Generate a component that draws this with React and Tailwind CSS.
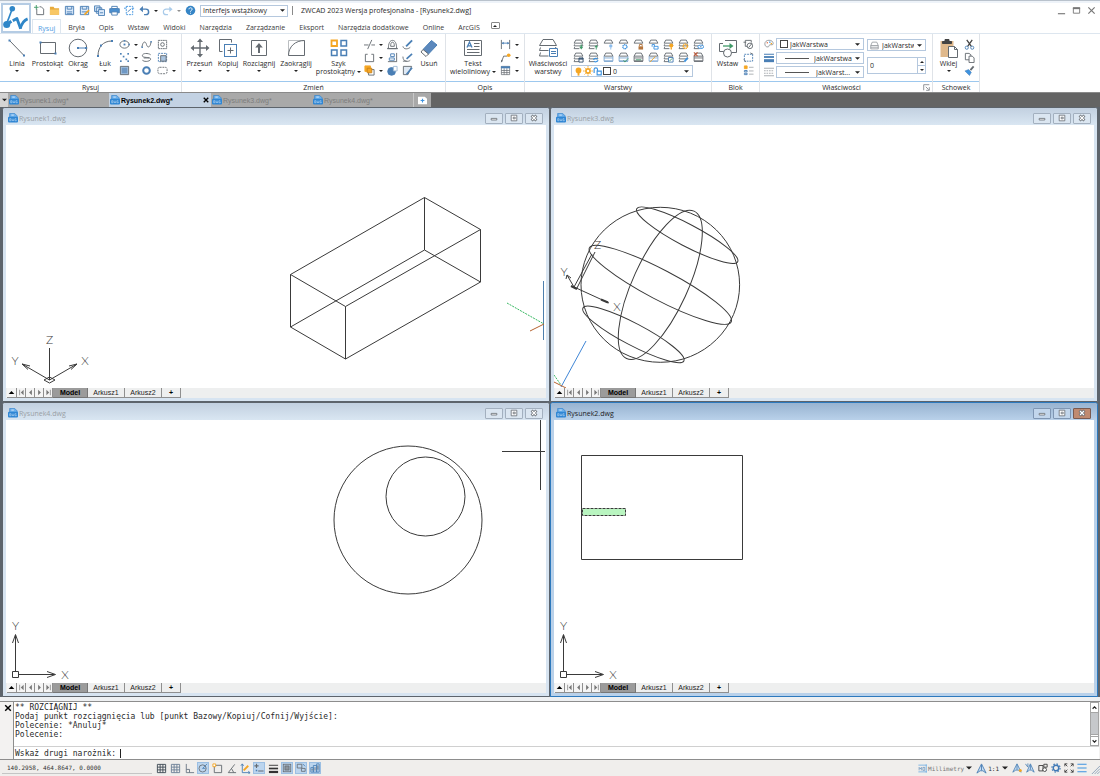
import React from "react";

const G = "#656b71";
const B = "#4a7fb5";
const L = "#3d93e0";
const O = "#f5a623";

/* ---------- icon drawings: large ones on a 20 grid, small ones on a 12 grid ---------- */

const Dot = ({ x, y, c = B, r = 1 }) => (
  <rect x={x - r} y={y - r} width={r * 2} height={r * 2} fill={c} stroke="none" />
);

const big = {
  linia: (
    <>
      <path d="M2.5 2.5 17 17.5" />
      <Dot x={2.5} y={2.5} />
      <Dot x={17} y={17.5} />
    </>
  ),
  prostokat: (
    <>
      <path d="M2.5 4.5h15v11h-15z" />
      <Dot x={2.5} y={4.5} />
      <Dot x={17.5} y={15.5} />
    </>
  ),
  okrag: (
    <>
      <circle cx="10" cy="10" r="8.8" />
      <path d="M10 10h8" stroke={B} />
      <Dot x={10} y={10} />
      <Dot x={18} y={10} />
    </>
  ),
  luk: (
    <>
      <path d="M3 18C3 9 8 3 17 3" />
      <Dot x={3} y={18} />
      <Dot x={6} y={7.5} />
      <Dot x={17} y={3} />
    </>
  ),
  przesun: (
    <>
      <path d="M10 2v16M2 10h16" strokeWidth="1.4" />
      <path d="m10 .5 3 3.5H7zM10 19.5l3-3.5H7zM.5 10 4 7v6zM19.500 10 16 7v6z" fill={G} stroke="none" />
    </>
  ),
  kopiuj: (
    <>
      <path d="M4.500 13.500h-3v-12h12v3" />
      <rect x="6.500" y="6.500" width="12" height="12" stroke={B} fill="#fff" />
      <path d="M12.500 9.500v6M9.500 12.500h6" />
    </>
  ),
  rozciagnij: (
    <>
      <path d="M2.500 2.500h15v15h-15z" />
      <path d="M10 15V8" strokeWidth="2" />
      <path d="m10 5 3.800 4.500H6.200z" fill={G} stroke="none" />
    </>
  ),
  zaokraglij: (
    <>
      <path d="M2.500 17.500v-15h16" stroke="#a9adb1" strokeWidth=".8" />
      <path d="M2.500 17.500c0-9 7-15 16-15v15z" />
    </>
  ),
  szyk: (
    <>
      <path d="M2.500 2.500h5.500v5.500H2.500z" stroke={O} strokeWidth="1.800" />
      <path d="M12 2.500h5.500v5.500H12zM2.500 12h5.500v5.500H2.500zM12 12h5.500v5.500H12z" stroke={B} strokeWidth="1.500" />
    </>
  ),
  usun: (
    <>
      <path d="M12.500 2.500 18 7 9.500 16 4 11.500z" fill="#5b88bd" stroke={B} />
      <path d="M4 11.500 9.500 16 7 18.500 2 14z" fill="#fff" />
    </>
  ),
  tekst: (
    <>
      <path d="M1.500 2.500h17v15h-17z" fill="#fff" />
      <path d="M4 9.500 6.500 4 9 9.500M5 7.800h3" stroke={B} strokeWidth="1.300" />
      <path d="M11 5.500h5.500M11 8.500h5.500M4 11.500h12.500M4 14.500h12.500" />
    </>
  ),
  wlasciwosci: (
    <>
      <path d="M5 1.500h10l3.500 6h-17z" fill="#fff" />
      <path d="M2.500 9.500l-1 3h9M2.500 14.500l-1 3.500h9M17.500 9l.5 1.500" />
      <path d="M11.500 10.500h8v8h-8z" fill="#fff" stroke={B} />
      <path d="M13 13.500h5M13 15.500h5" stroke={B} />
    </>
  ),
  wstaw: (
    <>
      <path d="M6 13.500H1.500v-8H5M7 2.500h11.500v12h-5" />
      <circle cx="9.500" cy="15" r="4" fill="#fff" />
      <path d="M5 8h7" stroke="#3f9a68" strokeWidth="1.300" />
      <path d="m11.500 5 4 3-4 3z" fill="#3f9a68" stroke="none" />
    </>
  ),
  wklej: (
    <>
      <path d="M1.500 3h13v16h-13z" fill="#e0b98c" stroke="none" />
      <path d="M3.500 3.500h9v2h-9zM6 1.500h4v2H6z" fill="#444" stroke="#444" />
      <path d="M9.500 8.500h6l3 3v8h-9z" fill="#fff" />
      <path d="M15.500 8.500v3h3" />
    </>
  ),
};

const small = {
  elipsa: (<><ellipse cx="6" cy="6" rx="5" ry="4" /><Dot x={6} y={6} /><Dot x={6} y={2} r={0.8} /><Dot x={11} y={6} r={0.8} /></>),
  punkty: (<>{[[2, 2], [10, 2], [5, 5], [2, 10], [8, 8], [10, 10]].map(([x, y]) => <Dot key={`${x}-${y}`} x={x} y={y} r={0.9} />)}</>),
  kreskuj: (<><path d="M1.500 1.500h9v9h-9z" fill="#a3bedb" /><path d="M3 3h6v6H3z" fill="#6f98c4" stroke="none" /></>),
  splajn: (<><path d="M1 9C2 2 5 2 6 6s4 4 5-3" /><Dot x={1.300} y={9} r={0.8} /><Dot x={11} y={3} r={0.8} /></>),
  spirala: <path d="M10.500 3C8 1 1.500 1 1.500 4S10 5 10.500 7.500 4 11.500 1.500 9M3 6.500h6" />,
  pierscien: <circle cx="6" cy="6" r="3.600" stroke={B} strokeWidth="2.200" />,
  region: (<><path d="M1.500 1.500h9v9h-9z" strokeDasharray="2 .5" /><circle cx="6" cy="6" r="2" /></>),
  obszar: (<><path d="M1.500 1.500h9v9h-9z" stroke={B} strokeDasharray="2 1" /><path d="M4 4h6v6H4z" fill="#a9c4e0" /></>),
  chmurka: <rect x="1" y="2.500" width="10" height="7" rx="2" strokeDasharray="2 1" />,
  utnij: (<><path d="M0 6.500h5M8 6.500h4" /><path d="M8.500 1 4 11" /></>),
  przerwij: <path d="M4 2.500H1.500v8h9v-8H8" />,
  kolejnosc: (<><path d="M1 1h6v6H1z" fill={O} stroke={O} /><path d="M5 5h6v6H5z" fill="#fff" /><path d="M3.500 3.500h5v5h-5z" fill={O} stroke="#c9821a" /></>),
  odsun: (<><path d="M1.500 10.500C1.500 5 3 1.500 6 1.500S10.500 5 10.500 10.500z" /><path d="M4 8c0-3 .5-4.500 2-4.500S8 5 8 8zM0 10.500h12" /></>),
  wyrownaj: (<><path d="M10.500 1v10M1 10.500h9" /><path d="M4 2h4v3H4zM2.500 6.500H8V9H2.500z" stroke={B} /></>),
  bryla: (<><circle cx="5" cy="7" r="4.200" fill={B} stroke={B} /><path d="M7 1.500h4v5H7z" fill="#fff" stroke="#9fb9d4" /></>),
  edytuj: (<><path d="M1 8c1 4 6 3 8 1" /><path d="M4.500 8 11 1.500" stroke={B} strokeWidth="2" /></>),
  edytuj2: (<><path d="M1 5c0 6 6 6 8 4M1 10h4" /><path d="M5 7.500 11 2" stroke={B} strokeWidth="1.800" /></>),
  edytuj3: (<><path d="M1.500 1.500h9l-4 9h-5z" fill="#dfe9f4" /><path d="M5 10 11 3" stroke={B} strokeWidth="1.800" /></>),
  wymiar: (<><path d="M1.500 1v10M10.500 1v10" /><path d="M2 4.500h8" stroke={B} /><path d="m2 4.500 2-1.500v3zM10 4.500 8 3v3z" fill={B} stroke="none" /></>),
  odnosnik: (<><path d="M1.500 11 4 4.500h4" /><path d="m1 11.500.3-3 2 1z" fill={G} stroke="none" /><circle cx="9.500" cy="3.500" r="2" fill={O} stroke="none" /></>),
  tabela: (<><path d="M1.500 1.500h9v9h-9zM1.500 6h9M1.500 8.300h9M4.500 3.500v7M7.500 3.500v7" strokeWidth=".8" /><path d="M1 2.500h10" stroke={B} strokeWidth="2.200" /></>),
  blok1: (<><path d="M9 4V1.500H2.500V8H5M.5 3.500h3" /><circle cx="7.500" cy="7.500" r="3" fill="#fff" /><path d="m6 9.500 4-5" /></>),
  blok2: (<><path d="M1.500 2.500h9v7.500h-9z" strokeDasharray="2 1" stroke={B} /><path d="m8 1 3 1.500M1 8l2 3" stroke={G} /></>),
  blok3: (<><path d="M1.500 1h3v3h-3z" fill={O} stroke={O} /><path d="M1.500 6h3v1.500h-3zM1.500 9h3v1.500h-3z" stroke={B} /><path d="M6.500 2.500h5M6.500 6.500h5M6.500 10h5" stroke="#a9adb1" /></>),
  paleta: (<><path d="M6 1.500c-3 0-5 2-5 4.300C1 8 2.500 10 5 9.500c1.500-.5.500-2 2-2.500s4 .8 4-1.500C11 3 9 1.500 6 1.500z" stroke="#8a8f94" /><Dot x={4} y={4.500} c="#e27b58" r={0.800} /><Dot x={7} y={3.800} c={L} r={0.800} /><Dot x={8.800} y={5.500} c={O} r={0.800} /></>),
  grubosc: (<><path d="M0 1.500h12" strokeWidth="1.200" stroke={B} /><path d="M0 4.800h12" strokeWidth="2.200" stroke={B} /><path d="M0 9.200h12" strokeWidth="3.600" stroke={B} /></>),
  rodzaj: (<><path d="M0 1.500h12M0 10.500h12" stroke="#9a9fa4" /><path d="M0 4.500h12M0 7.500h12" strokeDasharray="2 1" stroke="#9a9fa4" /></>),
  nozyczki: (<><path d="M3 1l5 7M9 1 4 8" strokeWidth="1.400" stroke="#444" /><circle cx="3" cy="9.500" r="1.700" stroke={B} /><circle cx="9" cy="9.500" r="1.700" stroke={B} /></>),
  kopie: (<><path d="M1.500 1.500h4L7.500 3v5.500h-6z" /><path d="M5.500 4.500h3.500l2 2v5H5.500z" fill="#fff" /></>),
  pedzel: (<><path d="M1 6.500 5 5l3 3-2 3.500z" fill={L} stroke={B} strokeWidth=".6" /><path d="m7 5.500 3.500-4" strokeWidth="2" stroke={G} /></>),
  nowy: (<><path d="M3 4v6.500h7.500V4.500L8 2H6" /><path d="M2.500 0v5M0 2.500h5" stroke="#3f9a68" /></>),
  otworz: (<><path d="M1 2h4l1 1.500h5v7H1z" fill="#e8ab3c" stroke="none" /><path d="M1 5h10v5.500H1z" fill="#f8c765" stroke="none" /></>),
  zapisz: (<><path d="M1.500 1.500h9v9h-9z" stroke={B} fill="#dceafa" /><path d="M3.500 1.500v3h5v-3M3 7.500h6M3 9.500h6" stroke={B} /></>),
  zapiszjako: (<><path d="M1.500 1.500h9v9h-9z" stroke={B} fill="#dceafa" /><path d="M3.500 1.500v3h5v-3M3 7.500h6" stroke={B} /><path d="m6 10.500 5-5" stroke={O} strokeWidth="1.800" /></>),
  wszystkie: (<><path d="M.5 1h6v6h-6zM2.500 3h6v6h-6z" stroke={B} fill="#dceafa" /><path d="M5 5h6.500v6.500H5z" stroke={B} fill="#dceafa" /><path d="M6.500 8.500h3.500" stroke={B} /></>),
  drukuj: (<><path d="M3 1.500h6V4H3z" stroke={B} /><path d="M.8 4h10.400v4.500H.8z" fill="#4a8fd0" stroke={B} /><path d="M3 7.500h6v3.500H3z" fill="#fff" stroke={B} /></>),
  podglad: (<><path d="M2.500 1.500h7v9h-7zM0 3.500h3M9 3.500h3" stroke={L} strokeDasharray="2 1" /><path d="M4 7.500 8 4" stroke={B} /></>),
  cofnij: (<><path d="M3 4.500h4.500a3 3 0 0 1 0 6H5.500" stroke={B} strokeWidth="1.600" /><path d="m.5 4.500 3.800-3.300v6.600z" fill={B} stroke="none" /></>),
  ponow: (<><path d="M9 4.500H4.500a3 3 0 0 0 0 6h2" stroke="#a9cbea" strokeWidth="1.300" /><path d="m11.500 4.500-3.500-3v6z" fill="#a9cbea" stroke="none" /></>),
  pomoc: (<><circle cx="6" cy="6" r="5.200" fill="#3585c6" stroke="none" /><path d="M4.300 4.700C4.300 2.500 7.800 2.500 7.800 4.600 7.800 6 6 5.800 6 7.300M6 8.500v1" stroke="#fff" /></>),
  dwg: (<><path d="M2 .5h6l3 3v4H2z" fill="#6db0ec" stroke="#2f7fc8" strokeWidth=".8" /><rect x="0" y="4.500" width="12" height="7" rx="1.300" fill="#2f86d4" stroke="none" /><path d="M2 6.800v2.500h1.500V6.800zM5 6.800v2.500l1-.8 1 .8V6.800M10 6.800H8.500v2.500H10V8" stroke="#cfe4f8" strokeWidth=".6" /><path d="M4 2.500h3" stroke="#fff" strokeWidth=".8" /></>),
  siatka: <path d="M1.500 1.500h9v9h-9zM4.500 1.500v9M7.500 1.500v9M1.500 4.500h9M1.500 7.500h9" stroke="#3f4a55" />,
  siatka2: <path d="M1.500 1.500h9v9h-9zM4.500 1.500v9M7.500 1.500v9M1.500 4.500h9M1.500 7.500h9" stroke="#6c8097" />,
  orto: <path d="M2.500 1v9.500H11M2.500 7h3.500v3.500" stroke="#6b7785" />,
  biegun: (<><circle cx="5.500" cy="6.500" r="4.300" /><path d="M5.500 6.500 11 1M5.500 6.500H9" stroke={B} /></>),
  obiekt: (<><path d="M2.500 2.500h8v8h-8z" /><path d="M1 1h3v3H1z" stroke={O} fill="#fff" /></>),
  kat: <path d="m9.500 1.500-7 9H11M6 6l2.500 4.500" />,
  ukl: (<><path d="M2.500 1v9.500H11M1 3l1.500-2L4 3M9 9l2 1.500L9 12" stroke={B} /><path d="m4 8 5-5" stroke={O} strokeWidth="2" /></>),
  dyn: (<><path d="M3 1v5M.5 3.500h5M5 9.500h6.500" strokeWidth="1.300" /><Dot x={3} y={9} r={0.900} /></>),
  linie: (<><path d="M1 2.500h10" stroke="#333" /><path d="M1 6h10" strokeWidth="1.800" stroke="#333" /><path d="M1 9.800h10" strokeWidth="2.400" stroke="#333" /></>),
  model: (<><rect x="1.500" y="1.500" width="9" height="9" /><rect x="3.500" y="3.500" width="5" height="5" fill="#8b949d" /></>),
  cykl: (<><path d="M1.500 1.500H7V6H1.500zM6.500 6.500h4.500V10H6.500z" /><path d="m8 1 3 3" stroke={B} /></>),
  warstwyStat: (<><path d="M1 5.500h3v5.500H1zM4 3h4v8H4zM8 1h3v10H8z" stroke={B} /><path d="M2.500 7v2M6 5v4M9.500 3v5" /></>),
  mo: (<><path d="M.5 1.500h11M.5 10.500h11M11 .5v11" stroke={L} strokeWidth=".8" /><path d="M1.500 8.500v-4l1.500 2 1.500-2v4M6.500 4.500h2.500v4H6.500z" stroke={B} strokeWidth=".8" /></>),
  ann: <path d="M6 1 1 11l3.500-2.500h3L11 11zM6 2v6" stroke={B} fill="#c9def2" />,
  annplus: (<><path d="M6 1 1 11l3.500-2.500h3L11 11zM6 2v6" stroke={B} fill="#c9def2" /><circle cx="10" cy="9" r="1.800" fill={O} stroke="none" /></>),
  annauto: (<><path d="M6.500 1 2 11l3.500-2.500h2L11 11zM6.500 2v6" stroke={B} fill="#c9def2" /><path d="m.5 1 3 4M3.500.500v4" stroke={B} /></>),
  izoluj: (<><path d="M1 3h5v6.500H1zM7 1.500h4V5H7z" stroke="#333" /><circle cx="8" cy="8" r="2.200" stroke="#333" fill="#fff" /></>),
  ust: (<><circle cx="6" cy="6" r="3.300" stroke="#3f78b5" strokeWidth="1.800" /><circle cx="6" cy="6" r="4.900" stroke="#3f78b5" strokeDasharray="1.800 2.050" strokeWidth="1.400" /></>),
  pelny: <path d="M1 4V1h3M8 1h3v3M11 8v3H8M4 11H1V8M1 1l3 3M11 1 8 4M11 11 8 8M1 11l3-3" stroke="#333" />,
  menu: <path d="M.5 1.500h11M.5 6h11M.5 10.500h11" stroke={L} strokeWidth="1.300" />,
};

const top = <path d="M3 1.200h6l1.800 3.300H1.200z" fill="#fff" />;
const full = <>{top}<path d="M1.800 5.800l-.6 1.700h9.600l-.6-1.700M1.800 8.800l-.6 1.700H7" /></>;
const stack = (c) => <>{top}<path d="M1.200 4.500v2h9.600v-2M1.200 6.500v3.500h9.600V6.500" stroke={c} /><path d="M1.200 10h9.600" stroke={c} strokeWidth="1.500" /></>;

const warstwy = {
  "Ustaw bieżącą": <>{full}<path d="M9 6v3" stroke="#3f9a68" strokeWidth="1.300" /><path d="M6.800 8.500h4.400L9 11.500z" fill="#3f9a68" stroke="none" /></>,
  "Poprzednia warstwa": <>{full}<path d="M9 8v3.500" stroke="#3f9a68" /><path d="M7 9h4L9 6.500z" fill="#3f9a68" stroke="none" /></>,
  "Wyłącz warstwę": <>{top}<circle cx="8.500" cy="7.500" r="1.800" fill="#8dbdec" stroke="none" /><path d="M8.500 9v2.500" stroke="#8dbdec" /></>,
  "Zablokuj widok": <>{top}<circle cx="7.500" cy="8.500" r="2.200" stroke={L} strokeWidth="1.500" strokeDasharray="1.200 .5" /></>,
  "Zamknij warstwę": <>{top}<path d="M6 8h5v3.500H6z" fill="#b5763e" stroke="none" /><path d="M7 8V6h3v2" stroke="#b5763e" /></>,
  "Otwórz warstwę": <>{top}<path d="M6.500 8h4.500v3H6.500z" stroke={L} /><path d="M4.500 8.500V6H7v2" stroke={L} /></>,
  "Włącz wszystkie": <>{full}<circle cx="9" cy="7" r="2.200" fill={O} stroke="none" /><path d="M9 9v2.500" stroke={O} strokeWidth="1.500" /></>,
  "Odblokuj wszystkie": <>{full}<circle cx="8" cy="8" r="2.300" stroke={O} strokeWidth="1.700" strokeDasharray="1.300 .5" /></>,
  "Izoluj warstwę": <>{full}<ellipse cx="8.500" cy="8.500" rx="3.200" ry="1.900" fill="#fff" stroke={L} /><Dot x={8.500} y={8.500} r={0.700} /></>,
  "Stany warstw": <>{full}<path d="M6.500 6.500H11v4.500H6.500z" fill="#fff" stroke="#33506e" /><path d="M6.500 7.500H11" stroke="#33506e" strokeWidth="1.600" /></>,
  "Zamień warstwę": <>{full}<path d="M6 8.500c1-2 3-2 4.500-1M11 9c-1 2-3 2-4.500 1" stroke={L} strokeWidth="1.400" /></>,
  "Przenieś na warstwę": stack("#7fa8d2"),
  "Dopasuj warstwę": <>{stack("#7fa8d2")}<path d="m6 9 1.500 2L11 7" stroke="#3f9a68" /></>,
  "Scal warstwy": <>{stack("#6a6f75")}<path d="M3 8.500h6" stroke="#3f9a68" /></>,
  "Przegląd warstw": <>{stack("#8fb3da")}<path d="m2 11 6-6" stroke={O} /></>,
  "Kopiuj na warstwę": <>{full}<path d="M6 6h5v5H6z" stroke={B} fill="#fff" /><path d="m7 10 3-3" stroke="#3f9a68" /></>,
  "Przywróć warstwę": <>{full}<path d="m7 10.500 3.500-4" stroke={L} strokeWidth="2" /></>,
  "Usuń warstwę": <>{stack("#6a6f75")}<path d="m1 .5 4 4M5 .5l-4 4" stroke="#c05a3a" strokeWidth="1.200" /></>,
};

const Art = ({ children, box, className }) => (
  <svg viewBox={`0 0 ${box} ${box}`} className={className} fill="none" stroke={G} strokeWidth="1" aria-hidden="true">
    {children}
  </svg>
);

const Small = ({ name, className = "size-[11px]" }) => (
  <Art box={12} className={`shrink-0 ${className}`}>{small[name]}</Art>
);

const Caret = ({ className = "h-[3px] w-[5px]" }) => (
  <svg viewBox="0 0 6 3" className={`shrink-0 pointer-events-none ${className}`} aria-hidden="true">
    <path d="M0 0h6L3 3z" fill="#222" />
  </svg>
);

/* ---------- title bar ---------- */

const Logo = () => (
  <button aria-label="Menu aplikacji" className="size-[30px] shrink-0 border-2 border-[#b5cce4] bg-white">
    <svg viewBox="0 0 28 28" className="size-full" fill="none" stroke="#2f86c8" aria-hidden="true">
      <circle cx="10" cy="4" r="3" fill="#2f86c8" stroke="none" />
      <circle cx="4" cy="21" r="3.800" fill="#2f86c8" stroke="none" />
      <path d="M10 4 4 20" strokeWidth="1.800" />
      <path d="M4 21 9 17.500" strokeWidth="3.500" />
      <path d="M10.500 17 15 14.500 19 25.500" strokeWidth="3" strokeLinejoin="round" />
      <path d="M18.500 25.500c1.500-5 4-9 8-10.500" strokeWidth="3" />
    </svg>
  </button>
);

const Tool = ({ name, label }) => (
  <button aria-label={label} className="flex h-[13px] w-[15px] items-center justify-center">
    <Small name={name} />
  </button>
);

function TitleBar() {
  return (
    <div className="flex h-[15px] items-center">
      <div className="flex items-center">
        <Tool name="nowy" label="Nowy" />
        <Tool name="otworz" label="Otwórz" />
        <Tool name="zapisz" label="Zapisz" />
        <Tool name="zapiszjako" label="Zapisz jako" />
        <Tool name="wszystkie" label="Zapisz wszystko" />
        <Tool name="drukuj" label="Drukuj" />
        <Tool name="podglad" label="Podgląd" />
        <Tool name="cofnij" label="Cofnij" />
        <button aria-label="Lista cofania" className="flex w-[8px] justify-center"><Caret className="h-[2px] w-[4px]" /></button>
        <Tool name="ponow" label="Ponów" />
        <button aria-label="Lista ponawiania" className="flex w-[8px] justify-center opacity-50"><Caret className="h-[2px] w-[4px]" /></button>
        <Tool name="pomoc" label="Pomoc" />
      </div>
      <div className="ml-[2px] flex h-[12px] w-[88px] items-center border border-[#b5c8de] bg-white px-[2px]">
        <select aria-label="Obszar roboczy" className="h-full min-w-0 flex-1 appearance-none outline-none">
          <option>Interfejs wstążkowy</option>
        </select>
        <Caret />
      </div>
      <div className="ml-[4px] h-[9px] w-px bg-[#8a8a8a]" />
      <h1 className="ml-[8px]">ZWCAD 2023 Wersja profesjonalna - [Rysunek2.dwg]</h1>
      <div className="ml-auto flex gap-[5px] pr-[4px]">
        <button aria-label="Minimalizuj" className="flex size-[10px] items-center justify-center">
          <Art box={10} className="size-[9px]"><path d="M1 8.500h8" stroke="#8a8a8a" strokeWidth="1.500" /></Art>
        </button>
        <button aria-label="Maksymalizuj" className="flex size-[10px] items-center justify-center">
          <Art box={10} className="size-[9px]"><path d="M1.500 2h7v6h-7z" stroke="#777" /><path d="M1 2.500h8" stroke="#777" strokeWidth="2" /></Art>
        </button>
        <button aria-label="Zamknij" className="flex size-[10px] items-center justify-center">
          <Art box={10} className="size-[9px]"><path d="m1.500 1.500 7 7M8.500 1.500l-7 7" stroke="#777" strokeWidth="1.300" /></Art>
        </button>
      </div>
    </div>
  );
}

const ribbonTabs = ["Rysuj", "Bryła", "Opis", "Wstaw", "Widoki", "Narzędzia", "Zarządzanie", "Eksport", "Narzędzia dodatkowe", "Online", "ArcGIS"];

function RibbonTabs() {
  return (
    <nav className="flex h-[15px] items-stretch pt-px">
      {ribbonTabs.map((t, i) => (
        <button
          key={t}
          className={`pt-[3px] ${i === 0 ? "border border-b-0 border-[#dde6ef] px-[5px] text-[#4f9be3]" : "px-[7px] text-[#3a3a3a]"}`}
        >
          {t}
        </button>
      ))}
      <button aria-label="Zwiń wstążkę" className="ml-[4px] mt-[3px] flex h-[7px] w-[9px] items-center justify-center rounded-[1px] border border-[#888]">
        <svg viewBox="0 0 6 3" className="h-[2px] w-[4px]" aria-hidden="true"><path d="M0 3h6L3 0z" fill="#222" /></svg>
      </button>
    </nav>
  );
}

/* ---------- ribbon ---------- */

const Group = ({ title, width, children, launcher }) => (
  <section className={`flex shrink-0 flex-col border-r border-[#dfe3e8] ${width}`}>
    <div className="flex h-[47px] items-start pt-[4px]">{children}</div>
    <div className="flex h-[11px] items-center border-t border-[#9dc8ee] bg-white">
      <h2 className="flex-1 text-center">{title}</h2>
      {launcher && (
        <button aria-label={`${title} – okno dialogowe`} className="mr-[2px]">
          <Art box={10} className="size-[7px]"><path d="M1 9V1h8M4 4l4 4M9 4.500V9H4.500" /></Art>
        </button>
      )}
    </div>
  </section>
);

const BigButton = ({ icon, label, width, caret = true }) => {
  const lines = label.split("\n");
  return (
    <button className={`flex shrink-0 flex-col items-center ${width}`}>
      <Art box={20} className="mb-[2px] size-[20px]">{big[icon]}</Art>
      {lines.map((t, i) => (
        <span key={t} className="flex items-center gap-[2px] whitespace-nowrap leading-[8px]">
          {t}
          {caret && lines.length > 1 && i === lines.length - 1 && <Caret className="h-[2px] w-[4px]" />}
        </span>
      ))}
      {caret && lines.length === 1 && <Caret className="mt-[2px] h-[2px] w-[4px]" />}
    </button>
  );
};

const SmallColumn = ({ items, className = "" }) => (
  <div className={`flex shrink-0 flex-col gap-[2px] pt-px ${className}`}>
    {items.map(([name, label, caret]) => (
      <button key={name} aria-label={label} className="flex h-[11px] items-center">
        <Small name={name} />
        {caret && <Caret className="ml-[4px] h-[2px] w-[4px]" />}
      </button>
    ))}
  </div>
);

const Picker = ({ label, value, lead, className, valueClass = "" }) => (
  <div className={`flex items-center border border-[#b5c8de] bg-white pl-[2px] pr-[3px] ${className}`}>
    {lead}
    <select aria-label={label} className={`h-full min-w-0 flex-1 appearance-none overflow-hidden outline-none ${valueClass}`}>
      <option>{value}</option>
    </select>
    <Caret />
  </div>
);

const Swatch = () => <span className="mx-px size-[8px] shrink-0 border border-[#444] bg-white" />;
const LineSample = () => <span className="ml-[6px] h-px w-[24px] shrink-0 bg-[#555]" />;

function Ribbon() {
  return (
    <div className="flex h-[59px] overflow-hidden border-t border-[#dde6ef] bg-white">
      <Group title="Rysuj" width="w-[182px]">
        <BigButton icon="linia" label="Linia" width="w-[34px]" />
        <BigButton icon="prostokat" label="Prostokąt" width="w-[27px]" />
        <BigButton icon="okrag" label="Okrąg" width="w-[34px]" />
        <BigButton icon="luk" label="Łuk" width="w-[20px]" />
        <SmallColumn className="ml-[4px] w-[22px]" items={[["elipsa", "Elipsa", true], ["punkty", "Punkty", true], ["kreskuj", "Kreskowanie", true]]} />
        <SmallColumn className="w-[16px]" items={[["splajn", "Splajn"], ["spirala", "Spirala"], ["pierscien", "Pierścień"]]} />
        <SmallColumn items={[["region", "Region"], ["obszar", "Zakrycie"], ["chmurka", "Chmurka", true]]} />
      </Group>
      <Group title="Zmień" width="w-[264px]">
        <BigButton icon="przesun" label="Przesuń" width="w-[35px]" />
        <BigButton icon="kopiuj" label="Kopiuj" width="w-[22px]" />
        <BigButton icon="rozciagnij" label="Rozciągnij" width="w-[40px]" />
        <BigButton icon="zaokraglij" label="Zaokrąglij" width="w-[34px]" />
        <BigButton icon="szyk" label={"Szyk\nprostokątny"} width="w-[51px]" />
        <SmallColumn className="w-[23px]" items={[["utnij", "Utnij", true], ["przerwij", "Przerwij", true], ["kolejnosc", "Kolejność", true]]} />
        <SmallColumn className="w-[15px]" items={[["odsun", "Odsuń"], ["wyrownaj", "Wyrównaj"], ["bryla", "Suma brył"]]} />
        <SmallColumn className="w-[12px]" items={[["edytuj", "Edytuj polilinię"], ["edytuj2", "Edytuj splajn"], ["edytuj3", "Edytuj kreskowanie"]]} />
        <BigButton icon="usun" label="Usuń" width="w-[30px]" caret={false} />
      </Group>
      <Group title="Opis" width="w-[79px]">
        <BigButton icon="tekst" label={"Tekst\nwieloliniowy"} width="w-[54px]" />
        <SmallColumn items={[["wymiar", "Wymiar", true], ["odnosnik", "Odnośnik", true], ["tabela", "Tabela", true]]} />
      </Group>
      <Group title="Warstwy" width="w-[187px]">
        <BigButton icon="wlasciwosci" label={"Właściwości\nwarstwy"} width="w-[46px]" caret={false} />
        <div className="flex flex-col gap-[2px] pt-px">
          <div className="grid grid-cols-9 gap-x-[4px] gap-y-[2px] pl-[2px]">
            {Object.entries(warstwy).map(([label, art]) => (
              <button key={label} aria-label={label} className="size-[11px]">
                <Art box={12} className="size-[11px]">{art}</Art>
              </button>
            ))}
          </div>
          <Picker
            label="Bieżąca warstwa"
            value="0"
            className="h-[12px] w-[122px]"
            valueClass="pl-px"
            lead={
              <>
                <Art box={12} className="size-[9px]"><circle cx="6" cy="4.500" r="3.800" fill={O} stroke="none" /><path d="M6 8v3.500" stroke={O} strokeWidth="2.500" /></Art>
                <Art box={12} className="size-[10px]"><circle cx="6" cy="6" r="2.500" stroke={O} strokeWidth="2" /><path d="M6 0v2M6 10v2M0 6h2M10 6h2M1.800 1.800l1.500 1.500M8.700 8.700l1.500 1.500M10.200 1.800 8.700 3.300M3.300 8.700l-1.500 1.500" stroke={O} /></Art>
                <Art box={12} className="size-[9px]"><path d="M5.500 5.500H11v5H5.500zM1.500 8V3C1.500.5 6 .5 6 3v2" stroke={L} strokeWidth="1.500" /></Art>
                <Swatch />
              </>
            }
          />
        </div>
      </Group>
      <Group title="Blok" width="w-[48px]">
        <BigButton icon="wstaw" label="Wstaw" width="w-[31px]" caret={false} />
        <SmallColumn items={[["blok1", "Utwórz blok"], ["blok2", "Edytuj blok"], ["blok3", "Atrybuty"]]} />
      </Group>
      <Group title="Właściwości" width="w-[173px]" launcher>
        <div className="flex flex-col gap-[2px] pl-[4px]">
          {[
            ["paleta", "Kolor", "JakWarstwa", <Swatch key="s" />, "pl-px"],
            ["grubosc", "Grubość linii", "JakWarstwa", <LineSample key="l" />, "pl-[5px]"],
            ["rodzaj", "Rodzaj linii", "JakWarst...", <LineSample key="l" />, "pl-[7px]"],
          ].map(([icon, label, value, lead, valueClass]) => (
            <div key={label} className="flex items-center gap-[2px]">
              <Small name={icon} className="size-[10px]" />
              <Picker label={label} value={value} lead={lead} valueClass={valueClass} className="h-[12px] w-[88px]" />
            </div>
          ))}
        </div>
        <div className="flex flex-col gap-[6px] pl-[3px] pt-px">
          <Picker
            label="Styl wydruku"
            value="JakWarstwa"
            valueClass="mr-[3px] pl-[3px]"
            className="h-[12px] w-[59px]"
            lead={<Art box={12} className="size-[9px]"><path d="M3 1.500h6L11 6v4.500H1V6zM1 6h10M1 8.300h10" stroke="#8a8f94" /></Art>}
          />
          <div className="flex h-[17px] w-[59px] border border-[#b5c8de] bg-white">
            <input aria-label="Przezroczystość" defaultValue="0" className="min-w-0 flex-1 pl-[2px] outline-none" />
            <div className="flex w-[8px] flex-col divide-y divide-[#b5c8de] border-l border-[#b5c8de]">
              <button aria-label="Zwiększ" className="flex flex-1 items-center justify-center"><Caret className="h-[2px] w-[4px] rotate-180" /></button>
              <button aria-label="Zmniejsz" className="flex flex-1 items-center justify-center"><Caret className="h-[2px] w-[4px]" /></button>
            </div>
          </div>
        </div>
      </Group>
      <Group title="Schowek" width="w-[47px]">
        <BigButton icon="wklej" label="Wklej" width="w-[31px]" />
        <SmallColumn items={[["nozyczki", "Wytnij"], ["kopie", "Kopiuj do schowka"], ["pedzel", "Uzgodnij właściwości"]]} />
      </Group>
    </div>
  );
}

/* ---------- document tabs ---------- */

function DocumentTabs() {
  return (
    <div className="flex h-[15px] items-stretch border-t border-[#8a8a8a] bg-[#646464] font-['Liberation_Sans',sans-serif]">
      <button aria-label="Lista rysunków" className="flex w-[8px] items-center justify-center bg-[#d4d4d4]"><Caret className="h-[4px] w-[5px]" /></button>
      {["Rysunek1.dwg*", "Rysunek2.dwg*", "Rysunek3.dwg*", "Rysunek4.dwg*"].map((t, i) => (
        <div
          key={t}
          className={`flex items-center pr-[2px] ${i === 1 ? "w-[102px] bg-[#c3d2e3] font-bold text-black" : "w-[101px] bg-[#a9a9a9] text-[#7d7d7d]"}`}
        >
          <button className="flex flex-1 items-center gap-px pl-px">
            <Small name="dwg" className="size-[10px]" />
            {t}
          </button>
          {i === 1 && (
            <button aria-label="Zamknij rysunek">
              <Art box={8} className="size-[6px]"><path d="m1 1 6 6M7 1 1 7" stroke="#000" strokeWidth="1.800" /></Art>
            </button>
          )}
        </div>
      ))}
      <button aria-label="Nowy rysunek" className="flex w-[18px] items-center justify-center border-l border-[#c8c8c8] bg-[#a9a9a9]">
        <Art box={12} className="size-[9px]"><path d="M0 1h9l3 2.500V11H0z" fill="#fff" stroke="none" /><path d="M6 3.500v5M3.500 6h5" stroke={L} strokeWidth="1.500" /></Art>
      </button>
    </div>
  );
}

/* ---------- drawing windows ---------- */

const Label = ({ x, y, children }) => (
  <text x={x} y={y} textAnchor="middle" className="fill-[#3a3a3a] font-['Lato',sans-serif] text-[12px] font-light" stroke="none">{children}</text>
);

const FlatUcs = () => (
  <>
    <path d="M9.500 251v-36M12.500 254.500h36M6.500 251.500h6v6h-6z" />
    <path d="m6.500 223 3-8.500 3 8.500M41 251.500l8.500 3-8.500 3" />
    <Label x={9.500} y={210}>Y</Label>
    <Label x={59} y={259}>X</Label>
  </>
);

const drawings = {
  box: (
    <>
      <path d="M284.500 149.500 418.500 72.500l56 32-135 77zM284.500 202l134-77 56 32-135 77zM284.500 149.500V202M418.500 72.500V125M474.500 104.500V157M339.500 181.500V234" />
      <path d="M537.500 156v59" stroke="#4d7fae" />
      <path d="m501 178 37 21" stroke="#35b860" strokeDasharray="2 1" />
      <path d="m524 206 14-7" stroke="#b5622f" />
      <path d="M43.500 223v32M43.500 255 16 239M43.500 255 71 239M38 255l5.500-3 5.500 3-5.500 3z" />
      <path d="m24 241-8-2 6 5.500M63 241l8-2-6 5.500" />
      <Label x={43.500} y={219}>Z</Label>
      <Label x={9} y={240}>Y</Label>
      <Label x={79} y={240}>X</Label>
    </>
  ),
  sphere: (
    <>
      <ellipse cx="106.300" cy="159.800" rx="79.300" ry="77.500" />
      <ellipse cx="106.300" cy="159.800" rx="80" ry="15" transform="rotate(27.7 106.3 159.800)" />
      <ellipse cx="133.200" cy="110.200" rx="57" ry="11" transform="rotate(27.7 133.2 110.200)" />
      <ellipse cx="79.400" cy="209.400" rx="57" ry="11" transform="rotate(27.7 79.4 209.400)" />
      <ellipse cx="106.300" cy="159.800" rx="81" ry="27.500" transform="rotate(-65.4 106.3 159.800)" />
      <path d="M20 162 38 129M20 162l35 16M20 162l-7-12M23 163l18-36M12 154l1-4 4 3" />
      <path d="m17 161 6 3M47 174.500l7 3" strokeWidth="2" />
      <Label x={43.500} y={124}>Z</Label>
      <Label x={10} y={151}>Y</Label>
      <Label x={63} y={186}>X</Label>
      <path d="M32 216 7 262" stroke="#3f86d6" />
      <path d="m0 250 7 10" stroke="#35b860" strokeDasharray="2 1" />
      <path d="m0 257 12 6" stroke="#b5622f" />
    </>
  ),
  circles: (
    <>
      <circle cx="402" cy="100" r="74" />
      <circle cx="419.500" cy="76.500" r="39.500" />
      <path d="M496 31.500h43M534.500 0v70" />
      <FlatUcs />
    </>
  ),
  rectangle: (
    <>
      <path d="M27.500 35.500h161v104h-161z" />
      <path d="M28.500 88.500h43v7h-43z" fill="#b9f5c0" strokeDasharray="3 1" />
      <FlatUcs />
    </>
  ),
};

const WindowButton = ({ label, active, danger, children }) => (
  <button
    aria-label={label}
    className={`flex h-[11px] w-[18px] items-center justify-center rounded-[1px] border ${
      danger ? "border-[#7a5a50] bg-[#c08a70]" : active ? "border-[#7f96b3] bg-[#c2d6ec]" : "border-[#a3b0bf] bg-[#dbe6f1]"
    }`}
  >
    <Art box={10} className="size-[8px]">{children}</Art>
  </button>
);

const navGlyphs = [
  ["Lista arkuszy", "M1 7h8L5 3z"],
  ["Pierwszy arkusz", "M2 1h1v8H2zM8 1v8L4 5z"],
  ["Poprzedni arkusz", "M7 1v8L3 5z"],
  ["Następny arkusz", "M3 1v8l4-4z"],
  ["Ostatni arkusz", "M7 1h1v8H7zM2 1v8l4-4z"],
];

function DrawingWindow({ name, drawing, active }) {
  return (
    <section className={`flex min-h-0 min-w-0 flex-col rounded-t-[3px] border px-[3px] pb-[3px] ${active ? "border-[#2d79bd] bg-[#b9d1ea]" : "border-[#5d646c] bg-[#d7e4f1]"}`}>
      <header className={`-mx-[3px] flex h-[17px] shrink-0 items-center gap-px rounded-t-[2px] bg-linear-to-b pl-[5px] pr-[6px] pt-[3px] ${active ? "from-[#98b3d0] to-[#b9d1ea]" : "from-[#c2d0e0] to-[#d9e6f2]"}`}>
        <Small name="dwg" className="size-[10px]" />
        <h3 className={`flex-1 ${active ? "text-[#1d1d1d]" : "text-[#9a9fa5]"}`}>{name}</h3>
        <div className="flex gap-[2px]">
          <WindowButton label="Minimalizuj" active={active}><path d="M1.500 5.500h7v2h-7z" fill="#fff" /></WindowButton>
          <WindowButton label="Maksymalizuj" active={active}><path d="M1.500 1.500h7v7h-7z" fill="#fff" /><path d="M4 4h2.500v2H4z" /></WindowButton>
          <WindowButton label="Zamknij" danger={active}>
            <path d="m2 2 6 6M8 2 2 8" strokeWidth="3.500" /><path d="m2.500 2.500 5 5M7.500 2.500l-5 5" stroke="#fff" strokeWidth="1.500" />
          </WindowButton>
        </div>
      </header>
      <svg role="img" aria-label={name} className="min-h-0 w-full flex-1 overflow-hidden bg-white" fill="none" stroke="#3a3a3a" strokeWidth="1">
        {drawings[drawing]}
      </svg>
      <footer className="flex h-[10px] shrink-0 items-stretch bg-[#eeefef] font-['Liberation_Sans',sans-serif]">
        {navGlyphs.map(([label, d], i) => (
          <button key={label} aria-label={label} className="flex w-[9px] items-center justify-center border-b border-r border-[#8f8f8f] bg-[#f5f5f5] first:ml-px first:w-[10px]">
            <svg viewBox="0 0 10 10" className="size-[7px]" aria-hidden="true"><path d={d} fill={i === 0 ? "#000" : "#777"} /></svg>
          </button>
        ))}
        <button className="w-[35px] border-b border-r border-[#777] bg-[#9b9b9b] text-center font-bold text-black">Model</button>
        <button className="w-[37px] border-b border-r border-[#8f8f8f] text-[#222]">Arkusz1</button>
        <button className="w-[37px] border-b border-r border-[#8f8f8f] text-[#222]">Arkusz2</button>
        <button aria-label="Dodaj arkusz" className="w-[19px] border-b border-r border-[#8f8f8f] font-bold text-black">+</button>
      </footer>
    </section>
  );
}

/* ---------- command line and status bar ---------- */

function CommandLine() {
  return (
    <div className="flex h-[59px] shrink-0 border-y border-[#8d8d8d] bg-[#f3f2f1] pl-[2px] pr-px">
      <button aria-label="Zamknij wiersz poleceń" className="flex w-[12px] shrink-0 justify-center border-r border-[#8d8d8d] pt-[2px]">
        <Art box={10} className="size-[8px]"><path d="m1.500 1.500 7 7M8.500 1.500l-7 7" stroke="#000" strokeWidth="1.800" /></Art>
      </button>
      <div className="flex min-w-0 flex-1 flex-col bg-white font-['DejaVu_Sans_Mono',monospace] text-[8px] text-[#2a2a2a]">
        <div className="flex flex-1 border-b border-[#d0d0d0]">
          <div className="flex-1 pl-px pt-px leading-[9px]">
            <p>** ROZCIĄGNIJ **</p>
            <p>Podaj punkt rozciągnięcia lub [punkt Bazowy/Kopiuj/Cofnij/Wyjście]:</p>
            <p>Polecenie: *Anuluj*</p>
            <p>Polecenie:</p>
          </div>
          <div className="flex w-[9px] flex-col border border-[#a5a5a5] bg-white">
            <button aria-label="Przewiń w górę" className="flex h-[9px] items-center justify-center">
              <Art box={8} className="size-[5px]"><path d="m1 6 3-3 3 3" stroke="#222" strokeWidth="1.800" /></Art>
            </button>
            <div className="h-[23px] border-y border-[#a5a5a5] bg-[#c6c8cb]" />
            <button aria-label="Przewiń w dół" className="mt-auto flex h-[9px] items-center justify-center border-t border-[#a5a5a5]">
              <Art box={8} className="size-[5px]"><path d="m1 2 3 3 3-3" stroke="#222" strokeWidth="1.800" /></Art>
            </button>
          </div>
        </div>
        <label className="flex h-[12px] items-center gap-[4px] pl-px">
          Wskaż drugi narożnik:
          <input className="h-[9px] min-w-0 flex-1 border-l border-[#222] outline-none" />
        </label>
      </div>
    </div>
  );
}

const toggles = [
  ["siatka", "Skok"], ["siatka2", "Siatka"], ["orto", "Orto"], ["biegun", "Biegun", true], ["obiekt", "Obiekt"], ["kat", "Śledzenie"],
  ["ukl", "Dynamiczny LUW"], ["dyn", "Dane dynamiczne", true], ["linie", "Szerokość linii"], ["model", "Model", true], ["cykl", "Przełączanie wyboru", true], ["warstwyStat", "Szybkie właściwości", true],
];

function StatusBar() {
  return (
    <footer className="flex h-[16px] shrink-0 items-center bg-[#f0eeec] font-['DejaVu_Sans_Mono',monospace] text-[6px] text-[#333]">
      <output className="ml-[2px] flex h-[12px] w-[150px] items-center border-b border-[#c5c5c5] pl-[5px]">140.2958, 464.8647, 0.0000</output>
      <div className="ml-[3px] flex gap-[2px]">
        {toggles.map(([icon, label, on]) => (
          <button key={icon} aria-label={label} aria-pressed={!!on} className={`flex size-[12px] items-center justify-center ${on ? "border border-[#9cbfe3] bg-[#bcd5ee]" : ""}`}>
            <Small name={icon} className={on ? "size-[10px]" : "size-[11px]"} />
          </button>
        ))}
      </div>
      <div className="ml-auto flex items-center">
        <button className="flex items-center gap-px text-[#777]"><Small name="mo" className="size-[9px]" />Millimetry<Caret className="ml-px h-[4px] w-[6px]" /></button>
        <button className="ml-[4px] flex items-center gap-px"><Small name="ann" />1:1<Caret className="ml-[2px] h-[4px] w-[6px]" /></button>
        <div className="ml-[3px] flex gap-[2px]">
          {[["annplus", "Widoczność opisów"], ["annauto", "Skala automatyczna"], ["izoluj", "Izoluj obiekty"], ["ust", "Ustawienia"], ["pelny", "Pełny ekran"], ["menu", "Menu"]].map(([icon, label]) => (
            <button key={icon} aria-label={label} className="flex w-[11px] justify-center"><Small name={icon} className="size-[10px]" /></button>
          ))}
        </div>
        <svg viewBox="0 0 10 10" className="ml-[4px] size-[9px] self-end" stroke="#8ba0b8" aria-hidden="true"><path d="M1 10 10 1M4 10l6-6M7 10l3-3" /></svg>
      </div>
    </footer>
  );
}

export default function App() {
  return (
    <div className="flex h-screen flex-col overflow-hidden bg-white font-['Open_Sans',sans-serif] text-[7px] leading-[9px] text-[#2a2a2a]">
      <div className="h-[3px] shrink-0 border-t border-[#b9c2cc] bg-[#eef3f9]" />
      <div className="flex shrink-0 pl-px">
        <Logo />
        <div className="min-w-0 flex-1 pl-px">
          <TitleBar />
          <RibbonTabs />
        </div>
      </div>
      <Ribbon />
      <DocumentTabs />
      <main className="grid min-h-0 flex-1 grid-cols-2 grid-rows-2 bg-[#5d646c] px-[2px]">
        <DrawingWindow name="Rysunek1.dwg" drawing="box" />
        <DrawingWindow name="Rysunek3.dwg" drawing="sphere" />
        <DrawingWindow name="Rysunek4.dwg" drawing="circles" />
        <DrawingWindow name="Rysunek2.dwg" drawing="rectangle" active />
      </main>
      <div className="h-[4px] shrink-0 bg-[#eef0f2]" />
      <CommandLine />
      <StatusBar />
    </div>
  );
}
